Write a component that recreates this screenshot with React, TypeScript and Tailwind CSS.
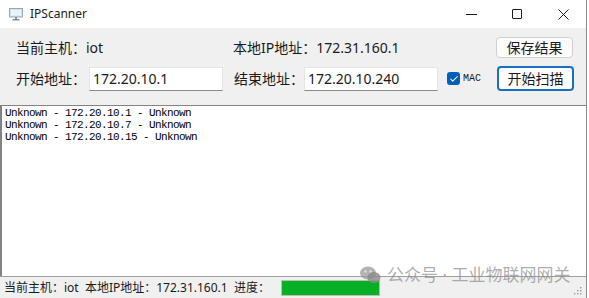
import { Check } from "lucide-react";

const ui = { fontFamily: '"Noto Sans", "Noto Sans CJK SC", sans-serif' };
const mono = { fontFamily: '"Liberation Mono", "Noto Sans CJK SC", monospace' };

const results = [
  "Unknown - 172.20.10.1 - Unknown",
  "Unknown - 172.20.10.7 - Unknown",
  "Unknown - 172.20.10.15 - Unknown",
];

function TitleBar() {
  return (
    <div className="h-[28px] bg-white flex items-center">
      {/* app icon */}
      <svg width="14" height="13" viewBox="0 0 14 13" className="ml-[9px]">
        <rect x="0.5" y="0.5" width="13" height="8.5" fill="#cfe3f2" stroke="#9aa7b0" />
        <rect x="2" y="2" width="10" height="5.5" fill="#e9f3fb" />
        <rect x="6" y="9" width="2" height="2" fill="#8a8f94" />
        <rect x="3.5" y="11" width="7" height="1.5" fill="#8a8f94" />
      </svg>
      <span className="ml-[7px] text-[12px] text-[#1a1a1a]" style={ui}>
        IPScanner
      </span>
      <div className="ml-auto flex h-full">
        <div className="w-[46px] flex items-center justify-center">
          <div className="w-[11px] h-[1px] bg-[#1a1a1a]" />
        </div>
        <div className="w-[46px] flex items-center justify-center">
          <div className="w-[10px] h-[10px] border border-[#1a1a1a] rounded-[1px]" />
        </div>
        <div className="w-[46px] flex items-center justify-center">
          <svg width="11" height="11" viewBox="0 0 11 11">
            <path d="M0.5 0.5 L10.5 10.5 M10.5 0.5 L0.5 10.5" stroke="#1a1a1a" strokeWidth="1" />
          </svg>
        </div>
      </div>
    </div>
  );
}

function Field({ value, w }: { value: string; w: string }) {
  return (
    <div
      className={`${w} h-[24px] bg-white border border-[#e5e5e5] border-b-[#8a8a8a] flex items-center pl-[3px] text-[14px] text-[#1a1a1a]`}
      style={ui}
    >
      {value}
    </div>
  );
}

export default function App() {
  return (
    <div className="w-[589px] h-[298px] bg-white relative overflow-hidden" style={ui}>
      <div className="w-[587px] h-[298px] border-r border-[#8c8c8c] bg-[#f0f0f0] flex flex-col">
        <TitleBar />

        {/* row 1 */}
        <div className="flex items-center h-[21px] mt-[9px] text-[14px] text-[#1a1a1a]">
          <span className="w-[233px] pl-[16px]">当前主机：iot</span>
          <span className="w-[263px]">本地IP地址：172.31.160.1</span>
          <button className="w-[77px] h-[21px] bg-[#fdfdfd] border border-[#d0d0d0] rounded-[4px] text-[14px] leading-none">
            保存结果
          </button>
        </div>

        {/* row 2 */}
        <div className="flex items-center h-[25px] mt-[8px] text-[14px] text-[#1a1a1a]">
          <span className="w-[89px] pl-[16px]">开始地址：</span>
          <Field value="172.20.10.1" w="w-[134px]" />
          <span className="w-[81px] pl-[11px]">结束地址：</span>
          <Field value="172.20.10.240" w="w-[134px]" />
          <div className="ml-[9px] w-[13px] h-[13px] rounded-[3px] bg-[#005fb8] flex items-center justify-center">
            <Check size={10} strokeWidth={2.5} color="#ffffff" />
          </div>
          <span className="ml-[3px] w-[34px] text-[10px] text-[#1a1a1a]" style={mono}>
            MAC
          </span>
          <button className="w-[77px] h-[25px] bg-[#fdfdfd] border-2 border-[#1a6fc0] rounded-[4px] text-[14px] leading-none">
            开始扫描
          </button>
        </div>

        {/* results */}
        <div className="mt-[14px] h-[171px] bg-white border-t border-l-2 border-[#828282] pl-[3px] pt-[1px] text-[11px] tracking-[-0.6px] leading-[12px] text-black" style={mono}>
          {results.map((r) => (
            <div key={r} className="whitespace-pre">
              {r}
            </div>
          ))}
        </div>

        {/* status bar */}
        <div className="flex-1 flex items-center pl-[4px] text-[12px] text-[#1a1a1a] relative border-t border-[#a0a0a0]">
          <span className="whitespace-pre">当前主机：iot  本地IP地址：172.31.160.1  进度：</span>
          <div className="ml-[11px] w-[99px] h-[16px] bg-[#06b025] border border-[#bcbcbc]" />
          <svg width="9" height="9" viewBox="0 0 9 9" className="absolute right-[4px] bottom-[3px]">
            <rect x="7" y="1" width="1.4" height="1.4" fill="#9a9a9a" />
            <rect x="4" y="4" width="1.4" height="1.4" fill="#9a9a9a" />
            <rect x="7" y="4" width="1.4" height="1.4" fill="#9a9a9a" />
            <rect x="1" y="7" width="1.4" height="1.4" fill="#9a9a9a" />
            <rect x="4" y="7" width="1.4" height="1.4" fill="#9a9a9a" />
            <rect x="7" y="7" width="1.4" height="1.4" fill="#9a9a9a" />
          </svg>
        </div>
      </div>

      {/* watermark */}
      <div className="absolute left-[360px] top-[262px] flex items-center gap-[6px] text-[17px] text-[#8a8a8a]/70">
        <svg width="21" height="18" viewBox="0 0 21 18">
          <ellipse cx="8" cy="7" rx="8" ry="6.5" fill="#9a9a9a" fillOpacity="0.75" />
          <ellipse cx="14" cy="11.5" rx="6.5" ry="5.5" fill="#8a8a8a" fillOpacity="0.8" />
          <circle cx="5.5" cy="5.5" r="1" fill="#f0f0f0" />
          <circle cx="10.5" cy="5.5" r="1" fill="#f0f0f0" />
        </svg>
        <span className="whitespace-pre">公众号 · 工业物联网网关</span>
      </div>
    </div>
  );
}
